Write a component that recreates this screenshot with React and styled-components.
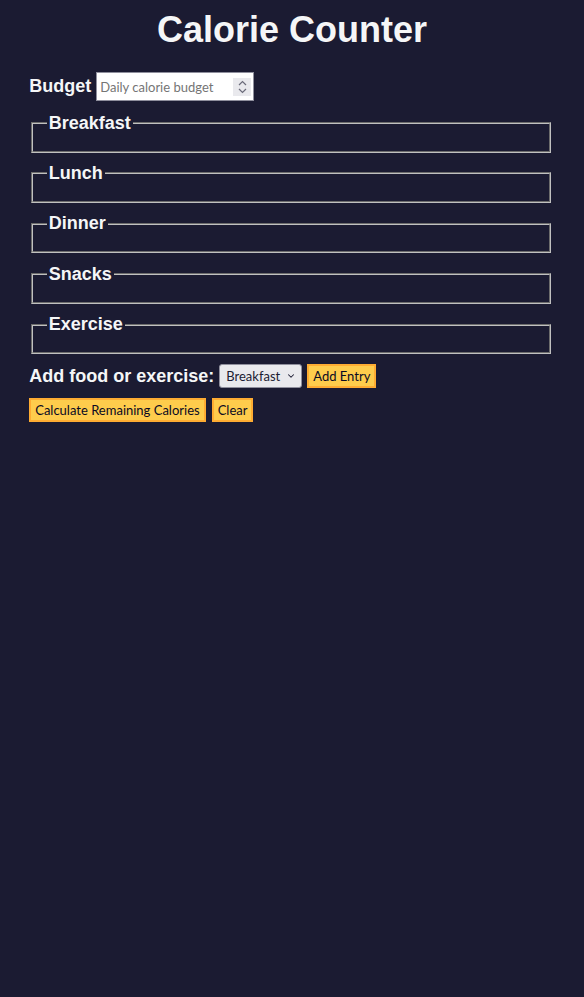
import React from 'react';
import styled, { createGlobalStyle } from 'styled-components';
import { ChevronDown } from 'lucide-react';

const GlobalStyle = createGlobalStyle`
  html, body {
    margin: 0;
    padding: 0;
    background-color: #1b1b32;
  }
  body {
    font-family: "Liberation Sans", Arial, Helvetica, sans-serif;
    font-size: 18px;
    color: #f5f6f7;
    min-height: 100vh;
  }
`;

const Main = styled.main`
  padding-top: 9px;
`;

const Title = styled.h1`
  margin: 0 0 22px;
  font-size: 36px;
  line-height: 41px;
  font-weight: bold;
  text-align: center;
`;

const Container = styled.div`
  width: 90%;
  margin: 0 auto;
`;

const Form = styled.form`
  display: flex;
  flex-direction: column;
`;

const Row = styled.div`
  display: flex;
  align-items: center;
  gap: ${(p) => p.$gap || 5}px;
  margin-top: ${(p) => p.$top || 0}px;
`;

const Label = styled.label`
  font-weight: bold;
  font-size: 18px;
`;

const NumberBox = styled.div`
  box-sizing: border-box;
  display: flex;
  align-items: center;
  width: 158px;
  height: 29px;
  background: #ffffff;
  border: 1px solid #8f8f9d;
  padding: 0 2px 0 3px;
`;

const NumberInput = styled.input`
  flex: 1;
  min-width: 0;
  border: none;
  outline: none;
  background: transparent;
  padding: 0;
  font-family: Lato, "Liberation Sans", sans-serif;
  font-size: 13px;
  color: #1b1b32;
  &::placeholder {
    color: #757575;
  }
  &::-webkit-outer-spin-button,
  &::-webkit-inner-spin-button {
    -webkit-appearance: none;
    margin: 0;
  }
  -moz-appearance: textfield;
`;

const Spin = styled.span`
  display: flex;
  align-items: center;
  justify-content: center;
  width: 18px;
  height: 18px;
  background: #e9e9ed;
`;

const Fieldset = styled.fieldset`
  margin: 0 4px 10.4px 2px;
  padding: 6px 13.5px 11px;
  border: 2px groove #c0c0c0;
  min-width: 0;
`;

const Legend = styled.legend`
  font-weight: bold;
  font-size: 18px;
  padding: 0 2px;
`;

const InputList = styled.div`
  display: flex;
  flex-direction: column;
`;

const Spacer = styled.div`
  height: 11.5px;
`;

const SelectWrap = styled.div`
  position: relative;
  display: inline-flex;
`;

const Select = styled.select`
  appearance: none;
  -webkit-appearance: none;
  box-sizing: border-box;
  height: 24px;
  width: 83px;
  padding: 0 18px 0 6px;
  border: 1px solid #8f8f9d;
  border-radius: 3px;
  background: #e9e9ed;
  color: #1b1b32;
  font-family: Lato, "Liberation Sans", sans-serif;
  font-size: 13px;
`;

const Chevron = styled(ChevronDown)`
  position: absolute;
  right: 6px;
  top: 7px;
  pointer-events: none;
  color: #1b1b32;
`;

const Button = styled.button`
  cursor: pointer;
  box-sizing: border-box;
  height: 24px;
  padding: 0 4px;
  background-color: #fecc4c;
  border: 2px solid #feac32;
  color: #0a0a23;
  font-family: Lato, "Liberation Sans", sans-serif;
  font-size: 13px;
`;

const meals = ['Breakfast', 'Lunch', 'Dinner', 'Snacks', 'Exercise'];

const SpinIcon = () => (
  <svg width="9" height="14" viewBox="0 0 9 14" fill="none" stroke="#6b6b7a" strokeWidth="1.2">
    <path d="M1 5 L4.5 1.5 L8 5" />
    <path d="M1 9 L4.5 12.5 L8 9" />
  </svg>
);

export default function App() {
  return (
    <>
      <GlobalStyle />
      <Main>
        <Title>Calorie Counter</Title>
        <Container>
          <Form onSubmit={(e) => e.preventDefault()}>
            <Row $gap={5}>
              <Label htmlFor="budget">Budget</Label>
              <NumberBox>
                <NumberInput
                  type="number"
                  min="0"
                  id="budget"
                  placeholder="Daily calorie budget"
                />
                <Spin>
                  <SpinIcon />
                </Spin>
              </NumberBox>
            </Row>
            <Spacer />
            {meals.map((m) => (
              <Fieldset key={m} id={m.toLowerCase()}>
                <Legend>{m}</Legend>
                <InputList />
              </Fieldset>
            ))}
            <Row $gap={5}>
              <Label htmlFor="entry-dropdown">Add food or exercise:</Label>
              <SelectWrap>
                <Select id="entry-dropdown" defaultValue="breakfast">
                  {meals.map((m) => (
                    <option key={m} value={m.toLowerCase()}>
                      {m}
                    </option>
                  ))}
                </Select>
                <Chevron size={10} strokeWidth={2.5} />
              </SelectWrap>
              <Button type="button">Add Entry</Button>
            </Row>
            <Row $gap={6} $top={10}>
              <Button type="submit">Calculate Remaining Calories</Button>
              <Button type="button">Clear</Button>
            </Row>
          </Form>
        </Container>
      </Main>
    </>
  );
}
